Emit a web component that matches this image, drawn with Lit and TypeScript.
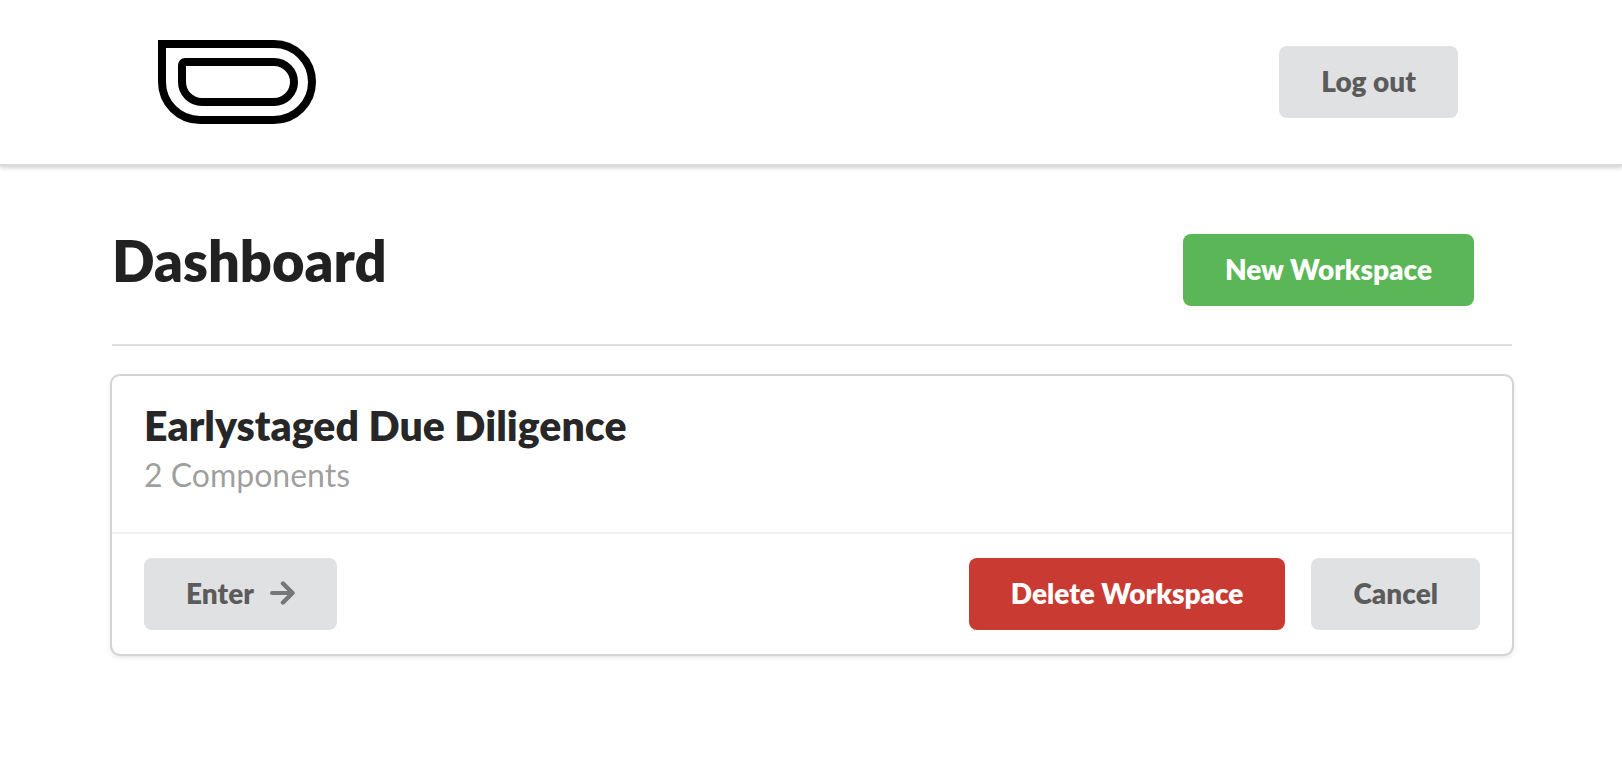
import { LitElement, html, css, svg } from "lit";
import { customElement, state } from "lit/decorators.js";

interface Workspace {
  name: string;
  components: number;
}

const logo = svg`
  <svg class="logo" width="158" height="84" viewBox="0 0 158 84" fill="none" stroke="#000" stroke-width="8" role="img" aria-label="Home">
    <path d="M4 4H116A38 38 0 0 1 116 80H42A38 38 0 0 1 4 42Z" />
    <path d="M27 22H116A20 20 0 0 1 116 62H44A20 20 0 0 1 24 42V25A3 3 0 0 1 27 22Z" />
  </svg>`;

const arrow = svg`
  <svg class="arrow" width="25" height="26" viewBox="0 0 25 26" fill="none" stroke="#767778" stroke-linecap="round" stroke-linejoin="round" stroke-width="4" aria-hidden="true">
    <path d="M2 13H21" />
    <path stroke-width="4.4" d="M13 3.5L22.5 13L13 22.5" />
  </svg>`;

@customElement("app-root")
export class AppRoot extends LitElement {
  static styles = css`
    :host {
      display: block;
      min-height: 100vh;
      background: #fff;
      color: rgba(0, 0, 0, 0.87);
      font-family: Lato, "Liberation Sans", sans-serif;
      font-size: 28px;
      line-height: 40px;
    }
    .header {
      display: flex;
      align-items: center;
      justify-content: space-between;
      padding: 40px 164px 40px 158px;
      border-bottom: 2px solid #dbdbdc;
      box-shadow: 0 2px 4px rgba(34, 36, 38, 0.2);
    }
    .home,
    .logo,
    .arrow {
      display: block;
    }
    .content {
      padding: 68px 110px 0 112px;
    }
    .heading {
      display: flex;
      align-items: flex-start;
      justify-content: space-between;
      padding: 0 38px 38px 0;
      border-bottom: 2px solid #dededf;
    }
    .title {
      margin: 0;
      font-size: 56px;
      line-height: 54px;
      font-weight: 800;
    }
    .card {
      margin-top: 30px;
      border-radius: 8px;
      box-shadow: 0 2px 6px #d4d4d5, 0 0 0 2px #d4d4d5;
    }
    .summary {
      padding: 22px 32px 36px;
    }
    .name {
      margin: 0;
      font-size: 41px;
      line-height: 56px;
      font-weight: 800;
      color: rgba(0, 0, 0, 0.85);
    }
    .meta {
      margin: 0;
      font-size: 32px;
      line-height: 42px;
      color: rgba(0, 0, 0, 0.4);
    }
    .actions {
      display: flex;
      gap: 26px;
      padding: 24px 32px;
      border-top: 2px solid #f2f2f2;
    }
    .push {
      margin-left: auto;
    }
    .button {
      display: flex;
      align-items: center;
      gap: 16px;
      height: 72px;
      padding: 0 42px 2px;
      border: 0;
      border-radius: 8px;
      background: #e0e1e2;
      color: rgba(0, 0, 0, 0.6);
      font: inherit;
      font-weight: 800;
      cursor: pointer;
    }
    .positive {
      background: #5ab656;
      color: #fff;
    }
    .negative {
      background: #c93a33;
      color: #fff;
    }
  `;

  @state() private workspaces: Workspace[] = [
    { name: "Earlystaged Due Diligence", components: 2 },
  ];

  private renderWorkspace(w: Workspace) {
    return html`
      <article class="card">
        <div class="summary">
          <h2 class="name">${w.name}</h2>
          <p class="meta">${w.components} Components</p>
        </div>
        <div class="actions">
          <button class="button" type="button">Enter ${arrow}</button>
          <button class="button negative push" type="button">Delete Workspace</button>
          <button class="button" type="button">Cancel</button>
        </div>
      </article>
    `;
  }

  render() {
    return html`
      <header class="header">
        <a class="home" href="#">${logo}</a>
        <button class="button" type="button">Log out</button>
      </header>
      <main class="content">
        <div class="heading">
          <h1 class="title">Dashboard</h1>
          <button class="button positive" type="button">New Workspace</button>
        </div>
        ${this.workspaces.map((w) => this.renderWorkspace(w))}
      </main>
    `;
  }
}
